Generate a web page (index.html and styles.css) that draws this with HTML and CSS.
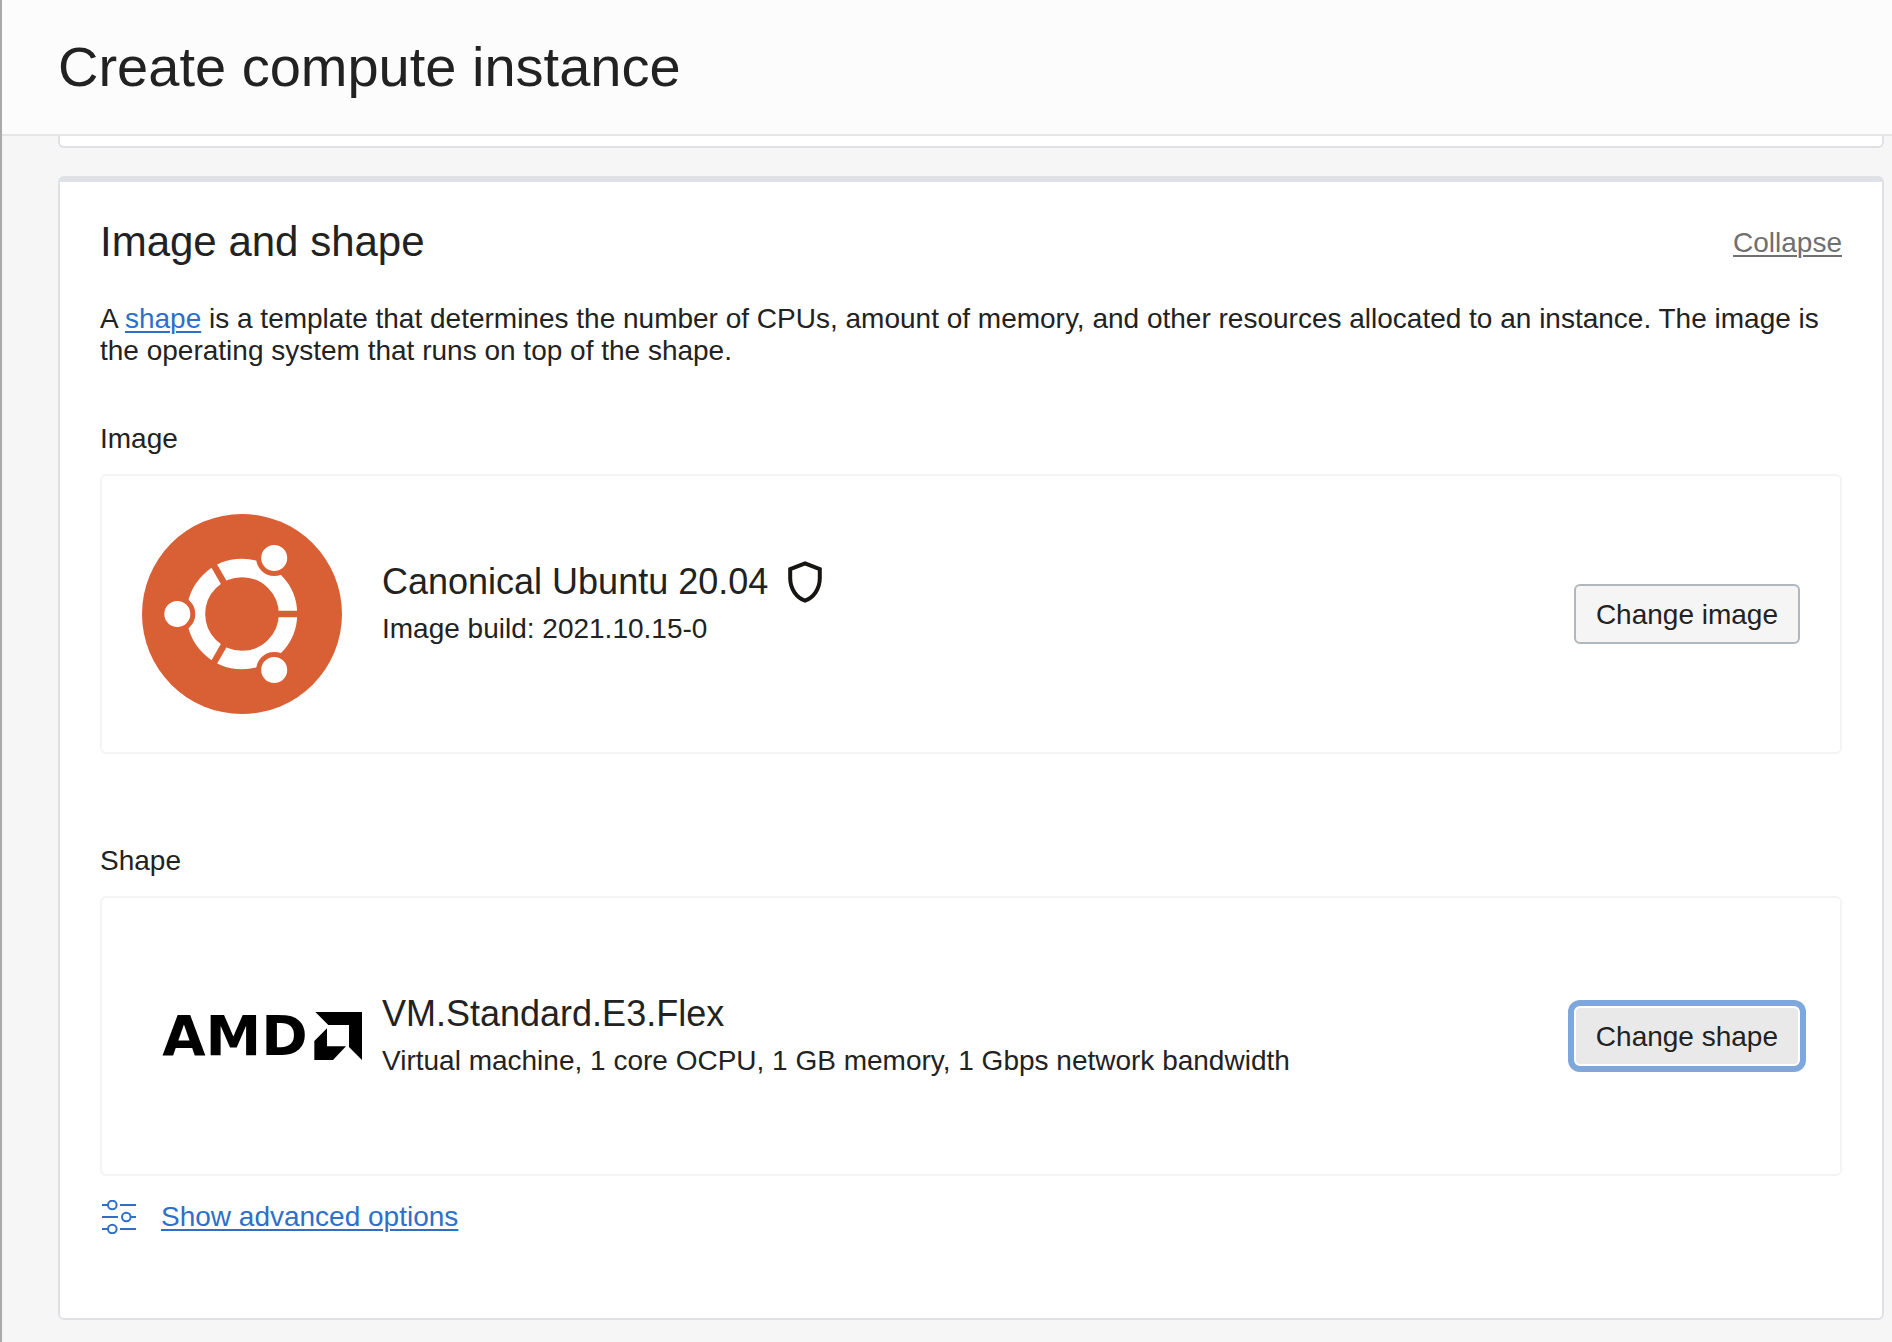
FILE: index.html
```html
<!DOCTYPE html>
<html lang="en">
<head>
<meta charset="utf-8">
<title>Create compute instance</title>
<link rel="stylesheet" href="styles.css">
</head>
<body>
<div class="page">
  <header class="page-header">
    <h1>Create compute instance</h1>
  </header>
  <main class="content">
    <div class="card card-end"></div>
    <section class="card card-main">
      <div class="card-head">
        <h2>Image and shape</h2>
        <a class="collapse" href="#">Collapse</a>
      </div>
      <p class="intro">A <a href="#">shape</a> is a template that determines the number of CPUs, amount of memory, and other resources allocated to an instance. The image is the operating system that runs on top of the shape.</p>

      <h3>Image</h3>
      <div class="option">
        <div class="logo">
          <svg width="200" height="200" viewBox="0 0 200 200" aria-hidden="true">
            <circle cx="100" cy="100" r="100" fill="#d95f34"/>
            <circle cx="100" cy="100" r="46" fill="none" stroke="#fff" stroke-width="18.4"/>
            <g fill="#fff" stroke="#d95f34" stroke-width="5">
              <path d="M132 100H158" stroke-width="6.5"/>
              <path d="M132 100H158" stroke-width="6.5" transform="rotate(120 100 100)"/>
              <path d="M132 100H158" stroke-width="6.5" transform="rotate(240 100 100)"/>
              <circle cx="35.3" cy="100" r="15.5"/>
              <circle cx="132.2" cy="44" r="15.5"/>
              <circle cx="132.2" cy="156" r="15.5"/>
            </g>
          </svg>
        </div>
        <div class="details details-image">
          <div class="name">Canonical Ubuntu 20.04
            <svg width="34" height="42" viewBox="0 0 34 42" aria-hidden="true">
              <path d="M17 2.3 31.8 8.2V17C31.8 28 25.5 36.5 17 39.7 8.5 36.5 2.2 28 2.2 17V8.2Z" fill="none" stroke="#161513" stroke-width="4"/>
            </svg>
          </div>
          <div>Image build: 2021.10.15-0</div>
        </div>
        <button type="button" class="btn">Change image</button>
      </div>

      <h3 class="second">Shape</h3>
      <div class="option">
        <div class="logo logo-amd">
          <span>AMD</span>
          <svg width="48" height="48" viewBox="0 0 144 144" aria-hidden="true">
            <path d="M4 0H144V144L105 105V39H43ZM39 49V103H96L57 144H1V87Z"/>
          </svg>
        </div>
        <div class="details details-shape">
          <div class="name">VM.Standard.E3.Flex</div>
          <div>Virtual machine, 1 core OCPU, 1 GB memory, 1 Gbps network bandwidth</div>
        </div>
        <button type="button" class="btn btn-focused">Change shape</button>
      </div>

      <div class="advanced">
        <svg width="34" height="34" viewBox="0 0 34 34" fill="none" stroke="#2d70c9" stroke-width="2" aria-hidden="true">
          <path d="M0 5H6M15 5M18 5H34M0 17H16M29 17H34M0 29H6M18 29H34"/>
          <circle cx="10.3" cy="5" r="4.3"/>
          <circle cx="24.3" cy="17" r="4.3"/>
          <circle cx="10.3" cy="29" r="4.3"/>
        </svg>
        <a href="#">Show advanced options</a>
      </div>
    </section>
  </main>
</div>
</body>
</html>
```
FILE: styles.css
```css
* { box-sizing: border-box; }

body {
  margin: 0;
  background: #f6f6f6;
  color: #222;
  font-family: "Liberation Sans", Arial, sans-serif;
  font-size: 28px;
  line-height: 32px;
}

h1, h2, h3, p { margin: 0; font-weight: 400; }

a {
  color: #2d70c9;
  text-decoration-thickness: 2px;
  text-underline-offset: 3px;
}

.page {
  min-height: 100vh;
  border-left: 2px solid #aaa;
}

.page-header {
  padding: 35px 56px;
  border-bottom: 2px solid #e6e6e6;
  background: #fcfcfc;
}

h1 { font-size: 56px; line-height: 64px; }
h2 { font-size: 42px; line-height: 48px; }
h3 { margin: 56px 0 19px; font-size: 28px; line-height: 32px; }
h3.second { margin-top: 91px; }

.content { padding: 0 8px 22px 56px; }

.card {
  border: 2px solid #e0e1e6;
  border-radius: 6px;
  background: #fff;
}

.card-end {
  height: 12px;
  margin-bottom: 28px;
  border-top: 0;
  border-radius: 0 0 6px 6px;
}

.card-main {
  padding: 36px 40px 84px;
  border-top-width: 6px;
}

.card-head {
  display: flex;
  justify-content: space-between;
  align-items: flex-end;
  margin-bottom: 37px;
}

.collapse {
  color: #707070;
  line-height: 46px;
}

.option {
  display: flex;
  align-items: center;
  min-height: 280px;
  padding: 38px 40px;
  border: 2px solid #f4f4f4;
  border-radius: 6px;
}

.logo {
  display: flex;
  align-items: center;
  flex: none;
  width: 240px;
}

.logo-amd {
  justify-content: center;
  gap: 6px;
  color: #000;
  font: bold 56px/56px "DejaVu Sans", sans-serif;
}

.details { flex: 1; }
.details-image { padding-bottom: 22px; }
.details-shape { padding-bottom: 2px; }

.name {
  display: flex;
  align-items: center;
  gap: 20px;
  margin-bottom: 10px;
  font-size: 36px;
  line-height: 42px;
}

.btn {
  min-width: 226px;
  height: 60px;
  padding: 2px 20px 0;
  border: 2px solid #b0b7bd;
  border-radius: 6px;
  background: #f5f5f5;
  color: #222;
  font: inherit;
}

.btn-focused {
  border-color: #fff;
  background: #e9e9e9;
  box-shadow: 0 0 0 6px #7fa7dc;
}

.advanced {
  display: flex;
  align-items: center;
  gap: 25px;
  margin-top: 24px;
  padding-left: 2px;
}
```
